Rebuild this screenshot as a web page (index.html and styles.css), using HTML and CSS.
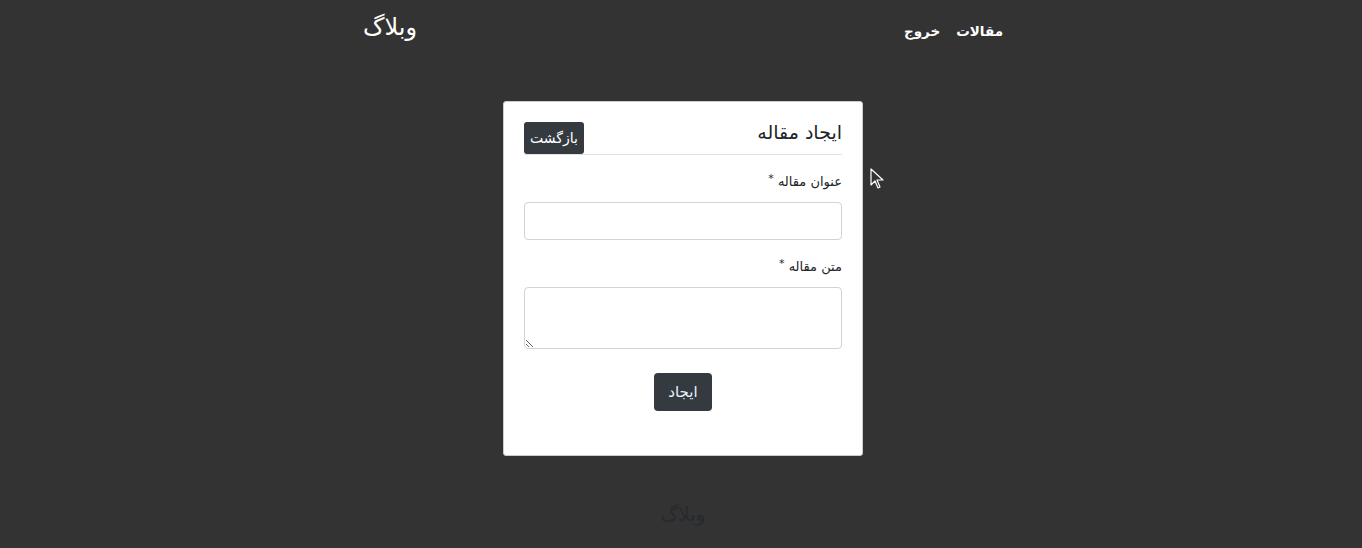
FILE: index.html
```html
<!DOCTYPE html>
<html lang="fa" dir="rtl">
<head>
<meta charset="utf-8">
<title>وبلاگ</title>
<link rel="stylesheet" href="styles.css">
</head>
<body>
<header class="navbar">
  <nav class="nav-links">
    <a href="#" class="nav-link">مقالات</a>
    <a href="#" class="nav-link">خروج</a>
  </nav>
  <a href="#" class="brand">وبلاگ</a>
</header>
<main class="main">
  <section class="card">
    <div class="card-header">
      <h1 class="card-title">ایجاد مقاله</h1>
      <a href="#" class="btn btn-sm">بازگشت</a>
    </div>
    <form class="form">
      <div class="field">
        <label class="label">عنوان مقاله <span class="req">*</span></label>
        <input type="text" class="control">
      </div>
      <div class="field">
        <label class="label">متن مقاله <span class="req">*</span></label>
        <textarea class="control textarea"></textarea>
      </div>
      <div class="actions">
        <button type="button" class="btn btn-submit">ایجاد</button>
      </div>
    </form>
  </section>
</main>
<footer class="footer">وبلاگ</footer>
<svg class="cursor" width="14" height="22" viewBox="0 0 14 22"><path d="M1 1 L1 17 L5 13 L8 20 L10 19 L7 12 L13 12 Z" fill="#333" stroke="#fff" stroke-width="1.2" stroke-linejoin="round"/></svg>
</body>
</html>
```
FILE: styles.css
```css
* { box-sizing: border-box; }
html, body { margin: 0; padding: 0; }
body {
  background: #333333;
  font-family: "DejaVu Sans", "Noto Sans", sans-serif;
  color: #212529;
  min-height: 548px;
  position: relative;
}
a { text-decoration: none; }
.navbar {
  width: 656px;
  margin: 0 auto;
  padding: 11px 6px 0 10px;
  height: 58px;
  display: flex;
  justify-content: space-between;
  align-items: flex-start;
}
.brand {
  color: #fff;
  font-size: 24px;
  line-height: 32px;
}
.nav-links {
  display: flex;
  gap: 16px;
  padding-top: 8px;
}
.nav-link {
  color: #fff;
  font-size: 13.5px;
  font-weight: bold;
  line-height: 24px;
}
.main {
  display: flex;
  justify-content: center;
  padding-top: 43px;
  padding-left: 4px;
}
.card {
  width: 360px;
  background: #fff;
  border: 1px solid #ccc;
  border-radius: 3px;
  padding: 20px 20px 44px;
}
.card-header {
  display: flex;
  justify-content: space-between;
  align-items: flex-start;
  border-bottom: 1px solid #dee2e6;
}
.card-title {
  margin: 0;
  font-size: 19px;
  font-weight: normal;
  line-height: 20px;
  color: #212529;
}
.btn {
  background: #343a40;
  color: #fff;
  border: none;
  border-radius: 3px;
  font-family: inherit;
  cursor: pointer;
}
.btn-sm {
  font-size: 14px;
  line-height: 20px;
  padding: 6px 6px;
  width: 60px;
  text-align: center;
}
.form { padding-top: 14px; }
.field { margin-bottom: 14px; }
.label {
  display: block;
  font-size: 13px;
  line-height: 20px;
  margin-bottom: 10px;
  color: #212529;
}
.req { font-size: 11px; vertical-align: 4px; }
.control {
  display: block;
  width: 100%;
  height: 38px;
  border: 1px solid #ced4da;
  border-radius: 4px;
  background: #fff;
  font-family: inherit;
  font-size: 14px;
  padding: 6px 12px;
}
.textarea { height: 62px; resize: vertical; }
.actions {
  display: flex;
  justify-content: center;
  padding-top: 10px;
}
.btn-submit {
  font-size: 15px;
  width: 58px;
  height: 38px;
  border-radius: 4px;
  color: #e6f2ff;
}
.footer {
  text-align: center;
  color: #262a2f;
  font-size: 20px;
  padding-top: 46px;
  padding-left: 4px;
}
.cursor {
  position: absolute;
  left: 870px;
  top: 168px;
}
```
